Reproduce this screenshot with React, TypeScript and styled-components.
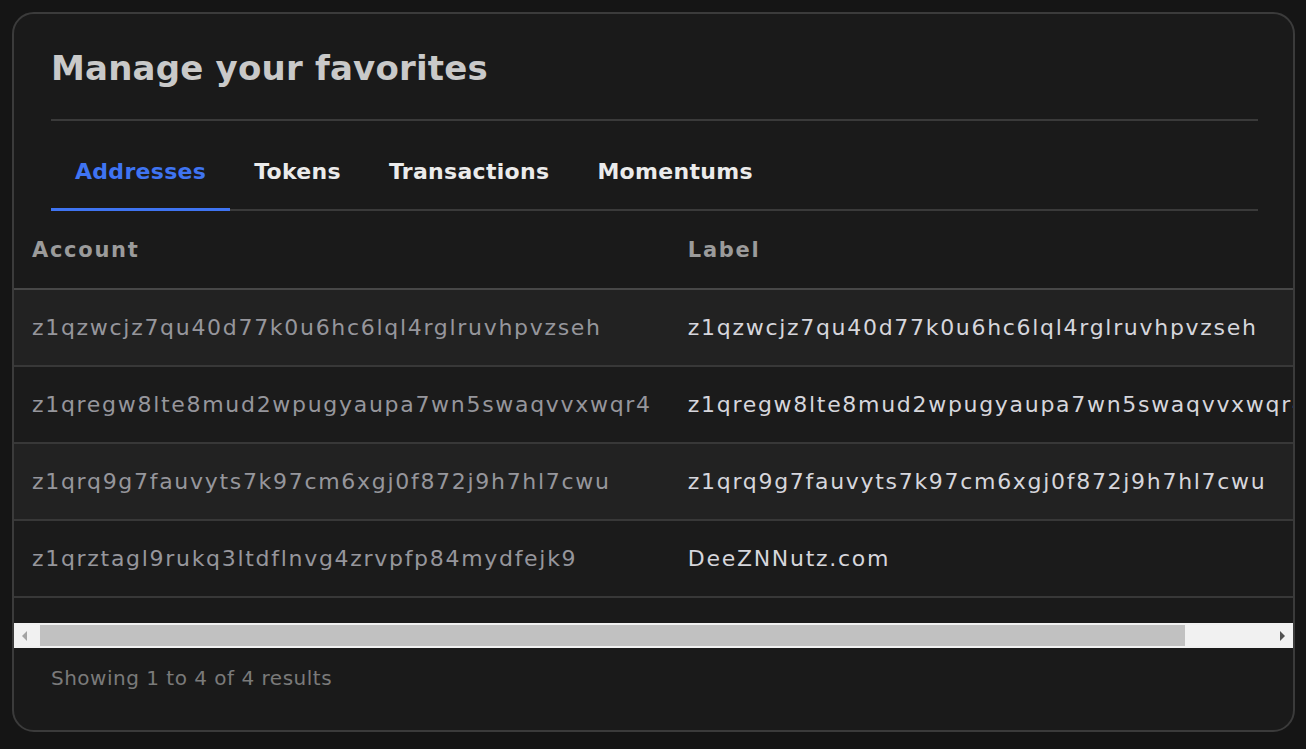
import React from 'react';
import styled, { createGlobalStyle } from 'styled-components';

const GlobalStyle = createGlobalStyle`
    html, body {
        margin: 0;
        background: #151515;
    }
    * {
        box-sizing: border-box;
    }
`;

const tabs = ['Addresses', 'Tokens', 'Transactions', 'Momentums'];

const favorites = [
    {
        account: 'z1qzwcjz7qu40d77k0u6hc6lql4rglruvhpvzseh',
        label: 'z1qzwcjz7qu40d77k0u6hc6lql4rglruvhpvzseh',
    },
    {
        account: 'z1qregw8lte8mud2wpugyaupa7wn5swaqvvxwqr4',
        label: 'z1qregw8lte8mud2wpugyaupa7wn5swaqvvxwqr4',
    },
    {
        account: 'z1qrq9g7fauvyts7k97cm6xgj0f872j9h7hl7cwu',
        label: 'z1qrq9g7fauvyts7k97cm6xgj0f872j9h7hl7cwu',
    },
    {
        account: 'z1qrztagl9rukq3ltdflnvg4zrvpfp84mydfejk9',
        label: 'DeeZNNutz.com',
    },
];

export default function App() {
    return (
        <Page>
            <GlobalStyle />
            <Card>
                {/* Title */}
                <Header>
                    <Title>Manage your favorites</Title>
                </Header>
                {/* Tabs */}
                <TabBar>
                    {tabs.map((tab, i) => (
                        <Tab key={tab} $active={i === 0}>
                            {tab}
                        </Tab>
                    ))}
                </TabBar>
                {/* Table */}
                <ScrollArea>
                    <Table>
                        <thead>
                            <tr>
                                <HeadCell>Account</HeadCell>
                                <HeadCell>Label</HeadCell>
                            </tr>
                        </thead>
                        <tbody>
                            {favorites.map((fav, i) => (
                                <Row key={fav.account} $striped={i % 2 === 0}>
                                    <Cell>{fav.account}</Cell>
                                    <Cell $light>{fav.label}</Cell>
                                </Row>
                            ))}
                        </tbody>
                    </Table>
                </ScrollArea>
                <Scrollbar>
                    <Arrow $dir="left" />
                    <Thumb />
                    <Arrow $dir="right" />
                </Scrollbar>
                {/* Footer */}
                <Footer>Showing 1 to 4 of 4 results</Footer>
            </Card>
        </Page>
    );
}

const font = `"DejaVu Sans", "Open Sans", sans-serif`;

const Page = styled.div`
    padding: 12px 11px 16px 12px;
    font-family: ${font};
`;

const Card = styled.div`
    height: 720px;
    border: 2px solid #3b3b3b;
    border-radius: 22px;
    background: #1a1a1a;
    overflow: hidden;
    display: flex;
    flex-direction: column;
`;

const Header = styled.div`
    margin: 0 35px 0 37px;
    padding: 30px 0 27px;
    border-bottom: 2px solid #3a3a3a;
`;

const Title = styled.h1`
    margin: 0;
    font-size: 34px;
    line-height: 48px;
    font-weight: 700;
    color: #c9c9c9;
    letter-spacing: 0.2px;
`;

const TabBar = styled.div`
    margin: 0 35px 0 37px;
    display: flex;
    border-bottom: 2px solid #3a3a3a;
`;

const Tab = styled.div<{ $active?: boolean }>`
    padding: 38px 24px 23px;
    margin-bottom: -2px;
    font-size: 22px;
    line-height: 26px;
    font-weight: 700;
    letter-spacing: 0.3px;
    color: ${(props) => (props.$active ? '#3f74f2' : '#ebebeb')};
    border-bottom: 3px solid
        ${(props) => (props.$active ? '#3f74f2' : 'transparent')};
`;

const ScrollArea = styled.div`
    overflow: hidden;
    padding-bottom: 25px;
`;

const Table = styled.table`
    border-collapse: collapse;
    white-space: nowrap;
`;

const HeadCell = styled.th`
    height: 78px;
    padding: 0 18px;
    text-align: left;
    font-size: 21px;
    font-weight: 700;
    letter-spacing: 1.7px;
    color: #9b9b9b;
    border-bottom: 2px solid #474747;
`;

const Row = styled.tr<{ $striped?: boolean }>`
    background: ${(props) => (props.$striped ? '#222222' : '#1b1b1b')};
    border-bottom: 2px solid #383838;
`;

const Cell = styled.td<{ $light?: boolean }>`
    height: 77px;
    padding: 0 18px;
    font-size: 22px;
    font-weight: 400;
    letter-spacing: 1.7px;
    color: ${(props) => (props.$light ? '#d6d6dc' : '#96969c')};
`;

const Scrollbar = styled.div`
    height: 25px;
    display: flex;
    align-items: center;
    background: #f1f1f1;
    padding: 0 8px;
    gap: 4px;
`;

const Thumb = styled.div`
    width: 1145px;
    height: 21px;
    margin-left: 9px;
    background: #c1c1c1;
    margin-right: auto;
`;

const Arrow = styled.div<{ $dir: 'left' | 'right' }>`
    width: 0;
    height: 0;
    border-top: 5px solid transparent;
    border-bottom: 5px solid transparent;
    ${(props) =>
        props.$dir === 'left'
            ? 'border-right: 5px solid #a3a3a3;'
            : 'border-left: 5px solid #505050;'}
`;

const Footer = styled.div`
    padding: 18px 37px;
    font-size: 20px;
    font-weight: 400;
    letter-spacing: 0.5px;
    color: #7a7a7a;
`;
